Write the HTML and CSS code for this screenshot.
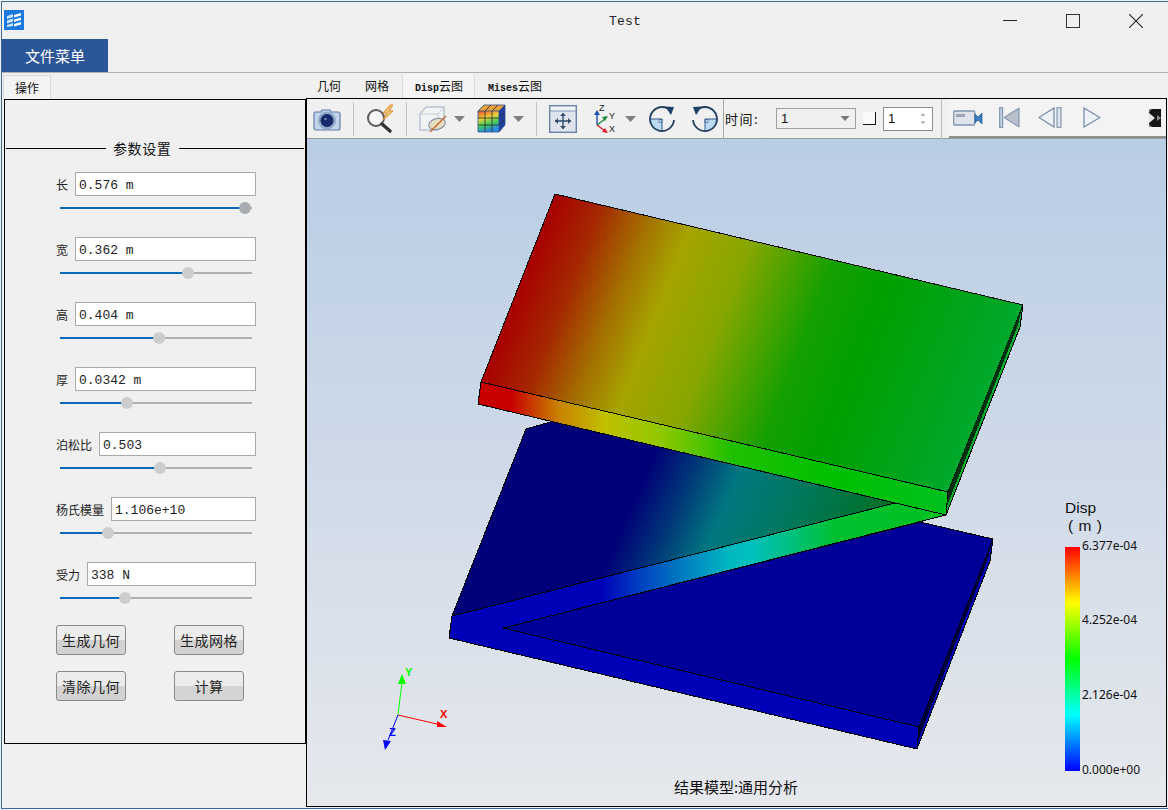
FILE: index.html
```html
<!DOCTYPE html>
<html lang="zh">
<head>
<meta charset="utf-8">
<title>Test</title>
<link rel="stylesheet" href="styles.css">
</head>
<body>
<div class="window">
  <header class="titlebar">
    <svg class="app-icon" viewBox="0 0 20 20"><rect width="20" height="20" fill="#1a78e0"/><path d="M3 6 9 4v3L3 9zM3 10.5l6-2v3l-6 2zM3 15l6-2v3l-6 1z" fill="#cfe4fb"/><path d="M10 5l7-2v2.5l-7 2zM10 9.5l7-2V10l-7 2zM10 14l7-2v2.500l-7 2z" fill="#fff"/></svg>
    <div class="title">Test</div>
    <div class="winctl"><svg viewBox="0 0 14 14"><path d="M0 6.500h14" stroke="#222" stroke-width="1"/></svg></div>
    <div class="winctl"><svg viewBox="0 0 14 14"><rect x=".5" y=".5" width="13" height="13" fill="none" stroke="#333"/></svg></div>
    <div class="winctl"><svg viewBox="0 0 14 14"><path d="M0 0l14 14M14 0 0 14" stroke="#222" stroke-width="1.100"/></svg></div>
  </header>
  <nav class="menubar"><div class="menu-btn">文件菜单</div></nav>
  <main class="content">
    <section class="left">
      <div class="tabs-left"><div class="tab-op">操作</div></div>
      <div class="panel">
        <div class="group-title"><span class="rule rule-l"></span><span class="group-text">参数设置</span><span class="rule rule-r"></span></div>
        <div class="form">
          <div class="fields">
            <div class="field"><div class="row"><span class="lab">长</span><div class="inp">0.576 m</div></div><div class="track"><div class="fill" style="width:185px"><i class="knob knob-on"></i></div></div></div>
            <div class="field"><div class="row"><span class="lab">宽</span><div class="inp">0.362 m</div></div><div class="track"><div class="fill" style="width:128px"><i class="knob"></i></div></div></div>
            <div class="field"><div class="row"><span class="lab">高</span><div class="inp">0.404 m</div></div><div class="track"><div class="fill" style="width:99px"><i class="knob"></i></div></div></div>
            <div class="field"><div class="row"><span class="lab">厚</span><div class="inp">0.0342 m</div></div><div class="track"><div class="fill" style="width:67px"><i class="knob"></i></div></div></div>
            <div class="field"><div class="row"><span class="lab">泊松比</span><div class="inp">0.503</div></div><div class="track"><div class="fill" style="width:100px"><i class="knob"></i></div></div></div>
            <div class="field"><div class="row"><span class="lab">杨氏模量</span><div class="inp">1.106e+10</div></div><div class="track"><div class="fill" style="width:48px"><i class="knob"></i></div></div></div>
            <div class="field"><div class="row"><span class="lab">受力</span><div class="inp">338 N</div></div><div class="track"><div class="fill" style="width:65px"><i class="knob"></i></div></div></div>
          </div>
          <div class="buttons">
            <div class="btn">生成几何</div>
            <div class="btn">生成网格</div>
            <div class="btn">清除几何</div>
            <div class="btn btn-low">计算</div>
          </div>
        </div>
      </div>
    </section>
    <section class="right">
      <div class="tabs-right">
        <div class="rtab rtab-1">几何</div>
        <div class="rtab rtab-2">网格</div>
        <div class="rtab rtab-3"><span class="lat">Disp</span>云图</div>
        <div class="rtab rtab-4"><span class="lat">Mises</span>云图</div>
      </div>
      <div class="viewer">
        <div class="toolbar">
          <svg class="ic i-cam" viewBox="0 0 28 24"><path d="M2 5h6l1-2h8l1 2h7a2 2 0 0 1 2 2v14a2 2 0 0 1-2 2H3a2 2 0 0 1-2-2V7a2 2 0 0 1 1-2z" fill="#c3d3e8" stroke="#5f7da6" stroke-width="1.200"/><circle cx="14" cy="13.500" r="9" fill="#8fa8c8"/><circle cx="14" cy="13.500" r="6.500" fill="#17296a"/><circle cx="12.500" cy="12" r="1.200" fill="#6f86b8"/></svg>
          <i class="sep s1"></i>
          <svg class="ic i-mag" viewBox="0 0 30 30"><circle cx="11" cy="14" r="8" fill="#f4f6f8" stroke="#5a5a5a" stroke-width="2"/><path d="M17 20l8 7" stroke="#333" stroke-width="3.500" stroke-linecap="round"/><path d="M25 1l-7 8h4l-4 7 10-9h-4l4-6z" fill="#f2c27a" stroke="#e0902c" stroke-width="1"/></svg>
          <i class="sep s2"></i>
          <svg class="ic i-cube" viewBox="0 0 28 28"><path d="M1 9l6-7h18v16l-6 7H1z" fill="#f2f3f5" stroke="#b9c3d0" stroke-width="1.500"/><path d="M1 9h18l6-7M19 9v16" fill="none" stroke="#c6cdd8"/><ellipse cx="18" cy="19" rx="8.500" ry="5.500" fill="#e6dcc0" stroke="#7d8aa0" transform="rotate(-15 18 19)"/><path d="M11 27 27 11" stroke="#c8602a" stroke-width="1.300"/></svg>
          <svg class="drop d1" viewBox="0 0 11 6"><path d="M0 0h11L5.500 6z"/></svg>
          <svg class="ic i-col" viewBox="0 0 29 29"><path d="M1 7l6-6h21v20l-6 7H1z" fill="#1f3f9f"/><path d="M1 7h21l6-6H7z" fill="#e9a13a"/><rect x="1" y="7" width="21" height="21" fill="url(#cc)"/><path d="M8 7v21M15 7v21M1 14h21M1 21h21M8 7l6-6M15 7l6-6M22 14l6-6M22 21l6-6" stroke="#2a2a2a" stroke-width=".8"/><path d="M1 7l6-6h21v20l-6 7H1zM22 7v21M1 7h21l6-6" fill="none" stroke="#2d4f8a" stroke-width=".8"/><defs><linearGradient id="cc" x1="0" y1="0" x2=".3" y2="1"><stop offset="0" stop-color="#ef4b2c"/><stop offset=".4" stop-color="#e9d33c"/><stop offset=".7" stop-color="#3fcf5c"/><stop offset="1" stop-color="#2b8ce0"/></linearGradient></defs></svg>
          <svg class="drop d2" viewBox="0 0 11 6"><path d="M0 0h11L5.500 6z"/></svg>
          <i class="sep s3"></i>
          <svg class="ic i-fit" viewBox="0 0 28 28"><rect x=".7" y=".7" width="26.600" height="26.600" fill="#dfe4ec" stroke="#6a82a8" stroke-width="1.400"/><rect x="1" y="1" width="26" height="5" fill="#eef1f6" stroke="#6a82a8" stroke-width=".8"/><path d="M14 8v16M6 16h16" stroke="#2f4668" stroke-width="1.300"/><path d="M14 8l-3 3h6zM14 24l-3-3h6zM6 16l3-3v6zM22 16l-3-3v6z" fill="#2f4668"/></svg>
          <svg class="ic i-axes" viewBox="0 0 28 30"><path d="M5 21V9" stroke="#1e50b0" stroke-width="1.400"/><path d="M5 6 2 11h6z" fill="#1e50b0"/><path d="M5 21 13 15" stroke="#1c8c3c" stroke-width="1.400"/><path d="M16 12l-6 1 3 4z" fill="#1c8c3c"/><path d="M5 21l8 6" stroke="#d8202a" stroke-width="1.400"/><path d="M16 29l-6-1 3-4z" fill="#d8202a"/><text x="7" y="7" class="ax-l">Z</text><text x="17" y="15" class="ax-l">Y</text><text x="17" y="28" class="ax-l">X</text></svg>
          <svg class="drop d3" viewBox="0 0 11 6"><path d="M0 0h11L5.500 6z"/></svg>
          <svg class="ic i-rot" viewBox="0 0 26 26"><path d="M13 13H1A12 12 0 0 0 13 25z" fill="#bcd9f2"/><path d="M1 13h12v12" fill="none" stroke="#2f5c8a"/><rect x="10" y="13.500" width="3" height="3" fill="none" stroke="#2f5c8a" stroke-width=".6"/><path d="M18 2.100A12 12 0 1 0 25 14" fill="none" stroke="#24405f" stroke-width="1.800"/><path d="M16 .5 25 1 22 9z" fill="#1e3f6a"/></svg>
          <svg class="ic i-rot i-rot2" viewBox="0 0 26 26"><path d="M13 13h12A12 12 0 0 1 13 25z" fill="#bcd9f2"/><path d="M25 13H13v12" fill="none" stroke="#2f5c8a"/><rect x="13" y="13.500" width="3" height="3" fill="none" stroke="#2f5c8a" stroke-width=".6"/><path d="M8 2.100A12 12 0 1 1 1 14" fill="none" stroke="#24405f" stroke-width="1.800"/><path d="M10 .5 1 1 4 9z" fill="#1e3f6a"/></svg>
          <i class="sep s4"></i>
          <span class="time-lab">时间:</span>
          <div class="combo"><span>1</span><svg viewBox="0 0 11 6"><path d="M0 0h11L5.500 6z"/></svg></div>
          <i class="step"></i>
          <div class="spin"><span>1</span><svg viewBox="0 0 8 15"><path d="M4 0 7 4H1zM4 15 1 11h6z"/></svg></div>
          <i class="sep s5"></i>
          <div class="anim">
            <svg class="a-cam" viewBox="0 0 30 16"><rect x=".7" y="1" width="21" height="14" rx="1" fill="#dfe3e9" stroke="#7f94b2" stroke-width="1.300"/><rect x="3" y="4" width="9" height="3" fill="#9aa6b8"/><path d="M22 4l3 3 4-4v11l-4-4-3 3z" fill="#3a7fc0" stroke="#2a5f98" stroke-width=".8"/></svg>
            <svg class="a-first" viewBox="0 0 21 21"><rect x=".7" y=".7" width="3" height="19.600" fill="#c6d0de" stroke="#7288a8"/><path d="M20 1v19L5 10.500z" fill="#b8c0cc" stroke="#7288a8"/></svg>
            <svg class="a-prev" viewBox="0 0 24 21"><path d="M16 1v19L1 10.500z" fill="#eef1f5" stroke="#7288a8" stroke-width="1.200"/><rect x="19" y=".7" width="4" height="19.600" fill="#dfe4ec" stroke="#7288a8"/></svg>
            <svg class="a-play" viewBox="0 0 18 21"><path d="M1 1v19l16-9.500z" fill="#eef1f5" stroke="#7288a8" stroke-width="1.200"/></svg>
            <svg class="a-more" viewBox="0 0 12 18"><rect width="12" height="18" fill="#161616"/><path d="M0 4l6 5-6 5z" fill="#e8e8e8"/><path d="M0 0h3L0 3zM0 18h3l-3-3zM8 6l4 3-4 3z" fill="#8a8a8a"/></svg>
          </div>
        </div>
        <div class="view3d">
          <svg class="scene" viewBox="307 139 859 667">
            <defs>
              <linearGradient id="gTop" gradientUnits="userSpaceOnUse" x1="481" y1="382" x2="923" y2="556">
                <stop offset="0" stop-color="#a80000"/><stop offset=".1" stop-color="#a42800"/><stop offset=".2" stop-color="#a47000"/><stop offset=".29" stop-color="#a6a400"/><stop offset=".42" stop-color="#88a600"/><stop offset=".6" stop-color="#14a000"/><stop offset=".72" stop-color="#00a000"/><stop offset="1" stop-color="#00a82c"/>
              </linearGradient>
              <linearGradient id="gFront" gradientUnits="userSpaceOnUse" x1="478" y1="403" x2="948" y2="403">
                <stop offset=".07" stop-color="#c80000"/><stop offset=".17" stop-color="#c88000"/><stop offset=".27" stop-color="#c0c000"/><stop offset=".39" stop-color="#90c800"/><stop offset=".54" stop-color="#20c000"/><stop offset=".75" stop-color="#00c000"/><stop offset="1" stop-color="#00c020"/>
              </linearGradient>
              <linearGradient id="gTri" gradientUnits="userSpaceOnUse" x1="603" y1="570" x2="824" y2="666">
                <stop offset="0" stop-color="#000078"/><stop offset=".18" stop-color="#003878"/><stop offset=".36" stop-color="#007880"/><stop offset=".6" stop-color="#007860"/><stop offset="1" stop-color="#007020"/>
              </linearGradient>
              <linearGradient id="gWeb" gradientUnits="userSpaceOnUse" x1="450" y1="600" x2="950" y2="600">
                <stop offset=".3" stop-color="#0000b8"/><stop offset=".38" stop-color="#0040c0"/><stop offset=".46" stop-color="#0078c0"/><stop offset=".56" stop-color="#00b8c0"/><stop offset=".6" stop-color="#00c0c0"/><stop offset=".68" stop-color="#00c080"/><stop offset=".77" stop-color="#00c030"/><stop offset="1" stop-color="#00c020"/>
              </linearGradient>
              <linearGradient id="gBar" x1="0" y1="0" x2="0" y2="1">
                <stop offset="0" stop-color="#ff0000"/><stop offset=".25" stop-color="#ffff00"/><stop offset=".5" stop-color="#00ff00"/><stop offset=".75" stop-color="#00ffff"/><stop offset="1" stop-color="#0000ff"/>
              </linearGradient>
            </defs>
            <g class="edges">
              <polygon points="526,429 552,421.500 895,503 452,616" fill="url(#gTri)"/>
              <polygon points="503,628 920,522 993,539 919,727" fill="#000098"/>
              <polygon points="993,539 919,727 917,749 990,561" fill="#0000c0"/>
              <polygon class="flat" points="992,541 919,727 918,741 988,559" fill="#000038"/>
              <polygon class="flat" points="452,616 503,628 919,727 917,749 449,638" fill="#0000b8"/>
              <polygon class="flat" points="452,616 895,503 948,492 946,515 503,628" fill="url(#gWeb)"/>
              <path class="line" d="M452 616 449 638 917 749 919 727 503 628 946 515M452 616 895 503"/>
              <polygon points="481,382 948,492 946,515 478,404" fill="url(#gFront)"/>
              <polygon points="555,194 1023,305 948,492 481,382" fill="url(#gTop)"/>
              <polygon points="1023,305 948,492 946,515 1020,327" fill="#00b028"/>
              <polygon class="flat" points="1022,307 948,492 947,506 1018,325" fill="#003010"/>
            </g>
            <path class="ax-x" d="M398 715 437 724"/>
            <polygon points="437,721 447,727 437,727" fill="#f00"/>
            <path class="ax-y" d="M398 715 402 682"/>
            <polygon points="402,674 406,684 398,684" fill="#0f0"/>
            <path class="ax-z" d="M398 715 388 740"/>
            <polygon points="383,740 391,741 385,750" fill="#00f"/>
            <text x="405" y="676" class="tri tri-y">Y</text>
            <text x="440" y="718" class="tri tri-x">X</text>
            <text x="389" y="736" class="tri tri-z">Z</text>
            <text x="1065" y="513" class="leg-t">Disp</text>
            <text x="1068" y="531" class="leg-t leg-u">( m )</text>
            <rect x="1065" y="547" width="15" height="224" fill="url(#gBar)"/>
            <text x="1082" y="550" class="leg-n">6.377e-04</text>
            <text x="1082" y="624" class="leg-n">4.252e-04</text>
            <text x="1082" y="699" class="leg-n">2.126e-04</text>
            <text x="1082" y="774" class="leg-n">0.000e+00</text>
            <text x="736" y="793" class="caption">结果模型:通用分析</text>
          </svg>
        </div>
      </div>
    </section>
  </main>
</div>
</body>
</html>
```
FILE: styles.css
```css
* { box-sizing: border-box; }
html, body { margin: 0; padding: 0; height: 100%; background: #f0f0f0; overflow: hidden; }
body { padding-top: 1px; font-family: "Noto Sans CJK SC", "Noto Sans", sans-serif; color: #111; }
.window { margin-left: 1px; width: 1167px; height: 808px; border-top: 1px solid #3c6a9e; border-left: 1px solid #3c6a9e; border-bottom: 1px solid #3c6a9e; background: #f0f0f0; display: flex; flex-direction: column; }
.titlebar { height: 37px; flex: none; display: flex; align-items: flex-start; padding-right: 1px; }
.app-icon { width: 20px; height: 20px; margin: 8px 0 0 2px; flex: none; }
.title { flex: 1; padding: 10px 0 0 248px; text-align: center; font: 13px/20px "Liberation Mono", monospace; letter-spacing: .2px; color: #222; }
.winctl { width: 63px; height: 37px; display: flex; align-items: center; justify-content: center; }
.winctl svg { width: 14px; height: 14px; }
.menubar { height: 34px; flex: none; border-bottom: 1px solid #b0b0b0; }
.menu-btn { width: 106px; height: 33px; background: #2b579a; color: #fff; font-size: 15px; line-height: 34px; text-align: center; }
.content { display: flex; flex: 1; min-height: 0; }
.left { width: 304px; padding-left: 2px; flex: none; }
.tabs-left { height: 26px; padding-top: 2px; }
.tab-op { width: 48px; height: 24px; margin-left: -1px; background: #f3f3f3; border: 1px solid #d9d9d9; border-bottom: 0; font-size: 12px; line-height: 24px; text-align: center; }
.panel { width: 302px; height: 645px; border: 1px solid #000; padding: 0 1px; }
.group-title { display: flex; align-items: center; height: 16px; margin-top: 40px; }
.rule { height: 1px; background: #000; display: block; }
.rule-l { width: 100px; flex: none; }
.rule-r { flex: 1; }
.group-text { margin: 0 8px 0 7px; font-size: 14px; letter-spacing: .6px; line-height: 15px; white-space: nowrap; }
.form { margin: 16px 0 0 50px; width: 200px; }
.fields { display: flex; flex-direction: column; gap: 2px; }
.field { padding-bottom: 26px; }
.row { display: flex; align-items: center; height: 24px; gap: 7px; }
.lab { font-size: 12px; color: #222; white-space: nowrap; }
.inp { flex: 1; height: 24px; background: #fff; border: 1px solid #a9a9a9; padding: 1px 0 0 3px; font: 13px/23px "Liberation Mono", monospace; color: #222; }
.track { position: relative; margin: 11px 4px 0; height: 2px; background: #b0b0b0; }
.fill { position: relative; height: 2px; background: #0a68bd; }
.knob { position: absolute; right: -6px; top: -5px; width: 12px; height: 12px; border-radius: 50%; background: #cdcdcd; }
.knob-on { background: #a9adb1; }
.buttons { display: grid; grid-template-columns: 70px 70px; column-gap: 48px; row-gap: 16px; }
.btn { height: 30px; border: 1px solid #8a8a8a; border-radius: 3px; background: linear-gradient(#ececec 50%, #d2d2d2 50%); font-size: 14px; letter-spacing: .5px; line-height: 28px; text-align: center; color: #222; }
.btn-low { background: linear-gradient(#ececec 50%, #d4d4d4 50%); }
.right { width: 861px; flex: none; display: flex; flex-direction: column; padding-bottom: 1px; }
.tabs-right { height: 25px; display: flex; align-items: flex-end; flex: none; font-size: 12px; }
.rtab { height: 24px; line-height: 24px; white-space: nowrap; color: #111; }
.rtab-1 { margin-left: 11px; }
.rtab-2 { margin-left: 24px; }
.rtab-3 { margin-left: 13px; padding: 0 11px 0 12px; border-left: 1px solid #dcdcdc; border-right: 1px solid #dcdcdc; background: #f4f4f4; }
.rtab-4 { margin-left: 13px; }
.lat { font: 10px "Liberation Mono", monospace; font-weight: 700; }
.viewer { flex: 1; min-height: 0; border: 1px solid #000; display: flex; flex-direction: column; }
.toolbar { height: 40px; flex: none; display: flex; align-items: center; border-bottom: 1px solid #9a9a9a; }
.ic { display: block; flex: none; }
.sep { display: block; width: 1px; height: 34px; background: #c4c4c4; flex: none; }
.drop { width: 11px; height: 6px; flex: none; fill: #808080; }
.i-cam { width: 28px; height: 24px; margin-left: 6px; }
.s1 { margin-left: 12px; }
.i-mag { width: 30px; height: 30px; margin-left: 11px; }
.s2 { margin-left: 11px; }
.i-cube { width: 28px; height: 28px; margin-left: 12px; }
.d1 { margin-left: 7px; }
.i-col { width: 29px; height: 29px; margin-left: 12px; }
.d2 { margin-left: 7px; }
.s3 { margin-left: 12px; }
.i-fit { width: 28px; height: 28px; margin-left: 12px; }
.i-axes { width: 28px; height: 30px; margin-left: 15px; }
.ax-l { font: 9px "Liberation Sans", sans-serif; fill: #222; }
.d3 { margin-left: 5px; }
.i-rot { width: 26px; height: 26px; margin-left: 13px; }
.i-rot2 { margin-left: 17px; }
.s4 { margin-left: 5px; height: 40px; background: #a8a8a8; }
.time-lab { width: 52px; flex: none; font-size: 13px; padding-left: 1px; letter-spacing: 1.500px; white-space: nowrap; color: #111; }
.combo { width: 80px; height: 21px; flex: none; border: 1px solid #a0a0a0; display: flex; align-items: center; justify-content: space-between; padding: 0 5px 0 4px; font: 13px "Liberation Sans", sans-serif; }
.combo svg { width: 10px; height: 5px; fill: #777; }
.step { display: block; width: 13px; height: 13px; margin-left: 7px; flex: none; background: #fafafa; border-right: 1px solid #111; border-bottom: 1px solid #111; }
.spin { width: 50px; height: 24px; margin-left: 7px; flex: none; background: #fff; border: 1px solid #8c8c8c; display: flex; align-items: center; justify-content: space-between; padding: 0 6px 0 4px; font: 13px "Liberation Sans", sans-serif; }
.spin svg { width: 6px; height: 13px; fill: #aaa; }
.s5 { margin-left: 8px; height: 40px; background: #bcbcbc; }
.anim { flex: 1; height: 39px; margin-left: 7px; display: flex; align-items: center; border-bottom: 2px solid #8e8e8e; background: #f3f3f3; }
.a-cam { width: 30px; height: 16px; margin-left: 4px; flex: none; }
.a-first { width: 21px; height: 21px; margin-left: 16px; flex: none; }
.a-prev { width: 24px; height: 21px; margin-left: 18px; flex: none; }
.a-play { width: 18px; height: 21px; margin-left: 21px; flex: none; }
.a-more { width: 12px; height: 18px; margin-left: 48px; flex: none; }
.view3d { flex: 1; min-height: 0; background: linear-gradient(#b9cde5, #e6e8ec); }
.scene { display: block; width: 859px; height: 667px; }
.edges polygon { stroke: #000; stroke-width: 1; shape-rendering: crispEdges; }
.edges polygon.flat { stroke: none; }
.line { fill: none; stroke: #000; stroke-width: 1; shape-rendering: crispEdges; }
.ax-x { stroke: #f00; stroke-width: 1; fill: none; }
.ax-y { stroke: #0f0; stroke-width: 1; fill: none; }
.ax-z { stroke: #00f; stroke-width: 1; fill: none; }
.tri { font: 700 11px "Liberation Sans", sans-serif; }
.tri-x { fill: #f00; }
.tri-y { fill: #0f0; }
.tri-z { fill: #00f; }
.leg-t { font: 15.500px "Liberation Sans", sans-serif; fill: #111; }
.leg-u { word-spacing: 1px; }
.leg-n { font: 12px "Noto Sans", sans-serif; fill: #111; }
.caption { font: 15px "Noto Sans CJK SC", sans-serif; text-anchor: middle; fill: #111; }
```
